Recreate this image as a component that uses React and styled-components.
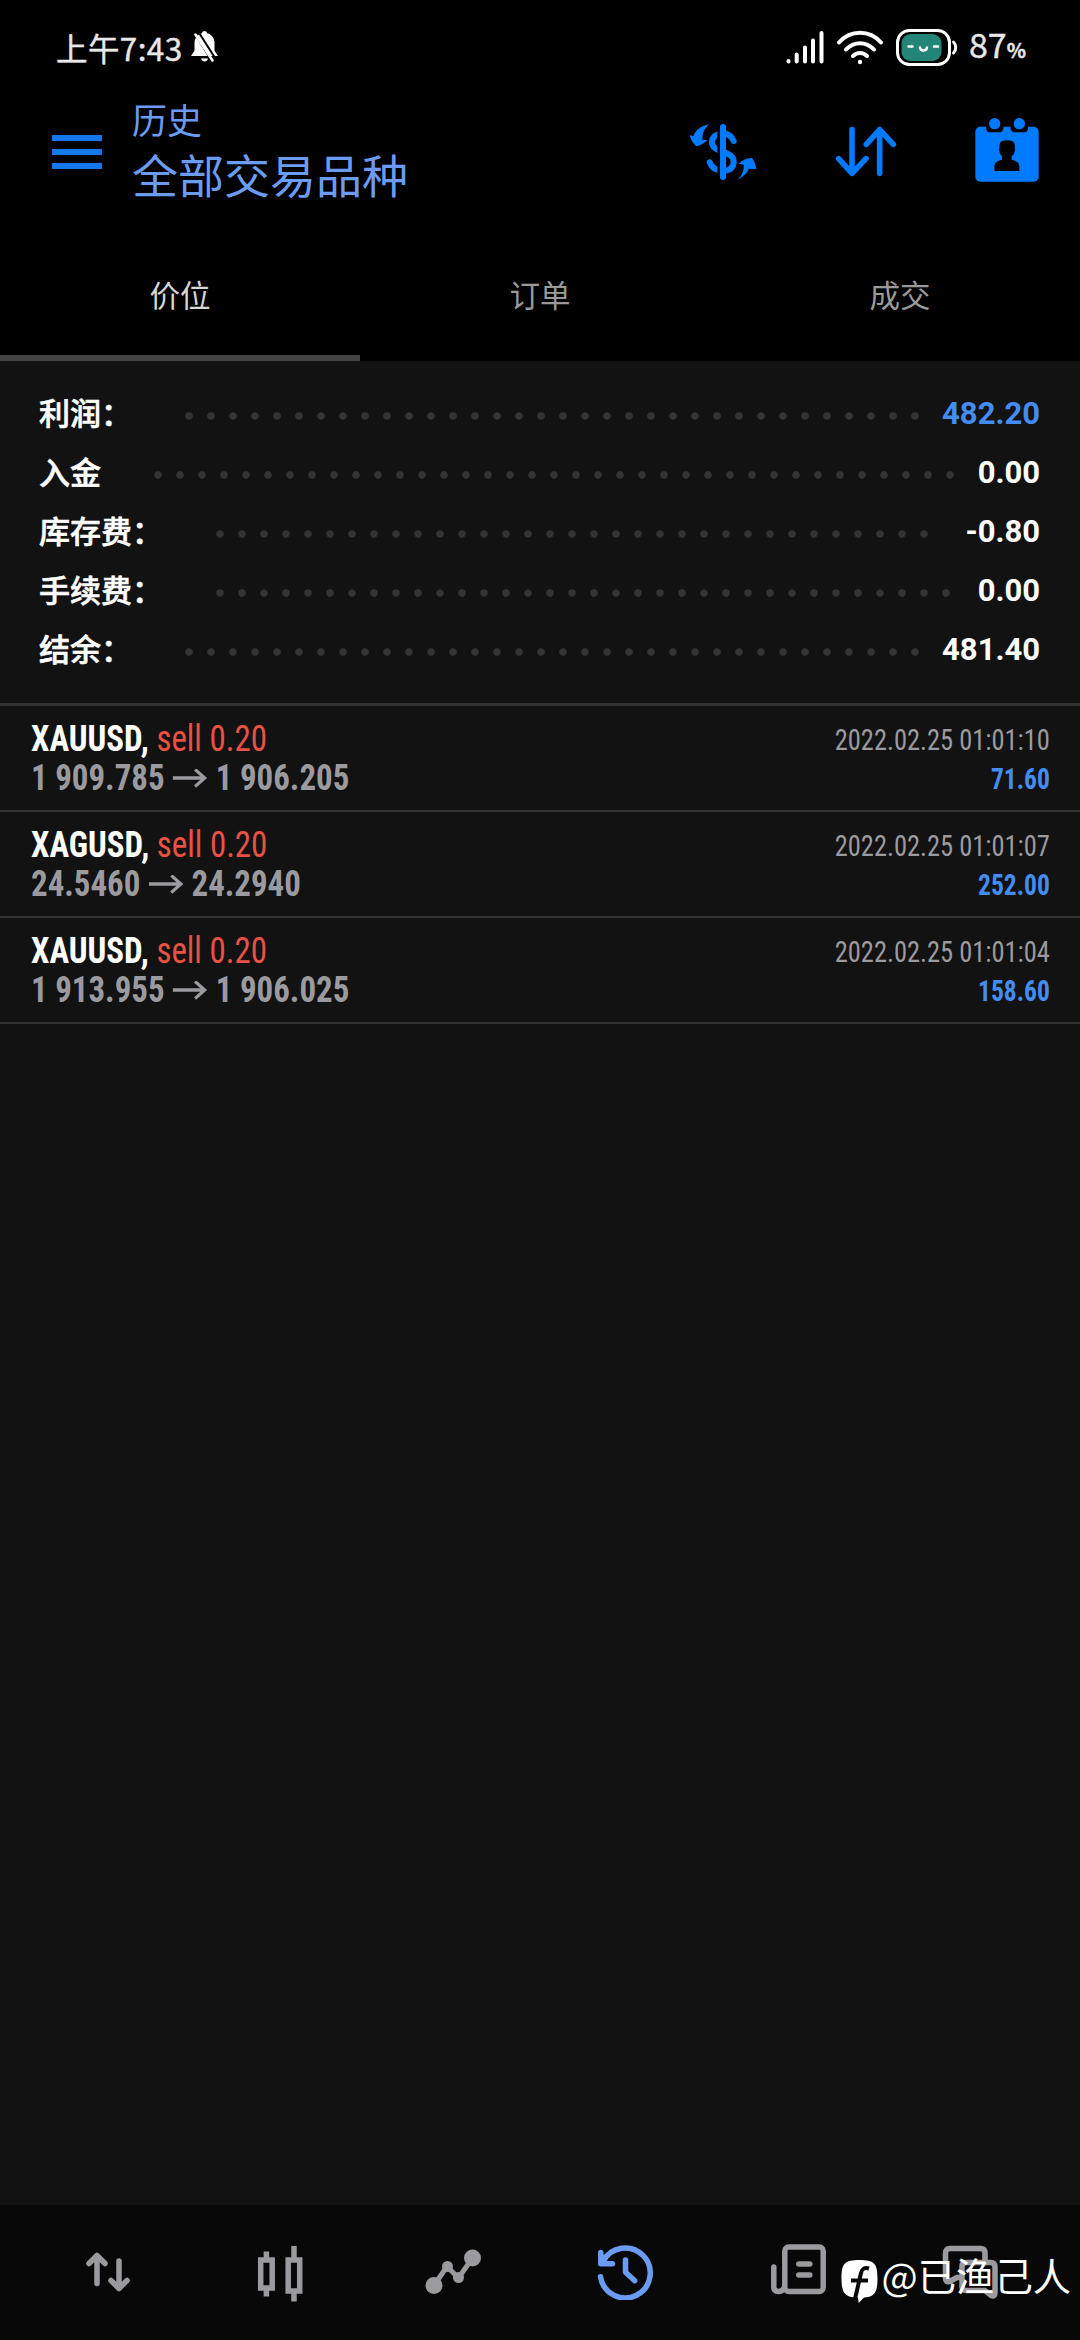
import React from 'react'
import styled, { createGlobalStyle } from 'styled-components'

const CJK = `"Noto Sans CJK SC", sans-serif`
const ROBOTO = `Roboto, "Noto Sans CJK SC", sans-serif`

const colors = {
    accent: "#007aff",
    title: "#6b9cf3",
    profit: "#458cf2",
    sell: "#ea5145",
    muted: "#9b9b9f",
    line: "#333333",
    panel: "#121212",
}

const summary = [
    { label: "利润：", dots: 34, value: "482.20", highlight: true },
    { label: "入金", dots: 37, value: "0.00" },
    { label: "库存费：", dots: 33, value: "-0.80" },
    { label: "手续费：", dots: 34, value: "0.00" },
    { label: "结余：", dots: 34, value: "481.40" },
]

const deals = [
    { symbol: "XAUUSD", side: "sell 0.20", open: "1 909.785", close: "1 906.205", time: "2022.02.25 01:01:10", profit: "71.60" },
    { symbol: "XAGUSD", side: "sell 0.20", open: "24.5460", close: "24.2940", time: "2022.02.25 01:01:07", profit: "252.00" },
    { symbol: "XAUUSD", side: "sell 0.20", open: "1 913.955", close: "1 906.025", time: "2022.02.25 01:01:04", profit: "158.60" },
]

const tabs = ["价位", "订单", "成交"]

const GlobalStyle = createGlobalStyle`
    body {
        margin: 0;
        background: #000;
    }
    svg {
        display: block;
        flex: none;
    }
`

const Screen = styled.div`
    position: relative;
    display: flex;
    flex-direction: column;
    width: 1080px;
    height: 2340px;
    overflow: hidden;
    background: ${colors.panel};
    font-family: ${ROBOTO};
    white-space: nowrap;
`

const StatusBar = styled.div`
    display: flex;
    align-items: center;
    height: 94px;
    padding: 0 54px 0 56px;
    background: #000;
    color: #e8e8e8;
    font-family: ${CJK};
`

const Clock = styled.span`
    flex: 1;
    display: flex;
    align-items: center;
    gap: 8px;
    margin-top: -1px;
    font-size: 31.5px;
    letter-spacing: 0.4px;
    line-height: 44px;
    -webkit-text-stroke: 0.4px;
`

const StatusIcons = styled.div`
    display: flex;
    align-items: center;
    gap: 12px;
`

const BatteryLevel = styled.span`
    margin-left: -1px;
    font-size: 34px;
    line-height: 44px;
    -webkit-text-stroke: 0.4px;

    small {
        font-size: 20px;
        font-weight: 700;
    }
`

const AppBar = styled.header`
    display: flex;
    align-items: center;
    height: 136px;
    padding: 0 41px 0 52px;
    background: #000;
`

const MenuButton = styled.div`
    display: flex;
    flex-direction: column;
    gap: 8px;
    width: 50px;
    margin: -20px 30px 0 0;

    i {
        height: 6px;
        background: #1478ec;
    }
`

const Titles = styled.div`
    flex: 1;
    color: ${colors.title};
    font-family: ${CJK};
    margin-top: -28px;
`

const Section = styled.div`
    font-size: 35px;
    line-height: 50px;
`

const Filter = styled.div`
    font-size: 46px;
    line-height: 58px;
`

const Actions = styled.div`
    display: flex;
    align-items: center;
    margin-top: -21px;
`

const SortSlot = styled.div`
    margin: 0 78px;
`

const CalendarSlot = styled.div`
    margin-top: -3px;
`

const TabRow = styled.nav`
    display: grid;
    grid-template-columns: repeat(3, 1fr);
    height: 131px;
    background: #000;
`

const Tab = styled.div`
    box-sizing: border-box;
    padding-top: 5px;
    border-bottom: 6px solid ${({ $active }) => $active ? "#444" : "transparent"};
    color: ${({ $active }) => $active ? "#d6d6d6" : "#9a9a9a"};
    font-family: ${CJK};
    font-size: 30.5px;
    line-height: 119px;
    text-align: center;
`

const Summary = styled.section`
    box-sizing: border-box;
    height: 345px;
    padding: 23px 40px 0 39px;
    border-bottom: 3px solid ${colors.line};
`

const SummaryLine = styled.div`
    display: flex;
    align-items: center;
    height: 59px;
`

const SummaryLabel = styled.span`
    margin-top: -4px;
    color: #fff;
    font-family: ${CJK};
    font-size: 31px;
    font-weight: 500;
    line-height: 59px;
    -webkit-text-stroke: 0.6px;
`

const Leader = styled.span`
    width: ${({ $count }) => $count * 22}px;
    height: 22px;
    margin: 5px auto 0 46px;
    background: radial-gradient(circle at 11px 11px, #343434 3.3px, transparent 4.2px) 0 0 / 22px 22px repeat-x;
`

const SummaryValue = styled.span`
    color: ${({ $highlight }) => $highlight ? colors.profit : "#fff"};
    font-size: 31px;
    font-weight: 700;
    line-height: 59px;
`

const DealRow = styled.article`
    display: flex;
    justify-content: space-between;
    box-sizing: border-box;
    height: 106px;
    padding: 14px 30px 0 31px;
    border-bottom: 2px solid ${colors.line};
    font-stretch: 75%;
    line-height: 39px;
`

const DealMain = styled.div`
    font-size: 36px;
    transform: scaleX(0.914);
    transform-origin: left;
`

const DealSide = styled.div`
    padding-top: 1px;
    font-size: 29px;
    text-align: right;
`

const Symbol = styled.div`
    color: #fff;
    font-weight: 700;

    span {
        color: ${colors.sell};
        font-weight: 400;
    }
`

const Prices = styled.div`
    display: flex;
    align-items: center;
    gap: 9px;
    color: ${colors.muted};
    font-weight: 700;
`

const Time = styled.div`
    color: ${colors.muted};
    transform: scaleX(0.912);
    transform-origin: right;
`

const Profit = styled.div`
    color: ${colors.profit};
    font-weight: 700;
    transform: scaleX(0.88);
    transform-origin: right;
`

const BottomNav = styled.nav`
    display: grid;
    grid-template-columns: repeat(6, 1fr);
    align-items: start;
    justify-items: center;
    box-sizing: border-box;
    height: 135px;
    margin-top: auto;
    padding: 38px 24px 0 22px;
    background: #080808;
    color: ${colors.muted};
`

const NavItem = styled.div`
    color: ${({ $active }) => $active ? colors.title : "inherit"};
`

const Watermark = styled.div`
    position: absolute;
    right: 9px;
    bottom: 36px;
    display: flex;
    align-items: center;
    gap: 3px;
    color: #fff;
    font-family: ${CJK};
    font-size: 38.3px;
    line-height: 44px;

    span {
        margin-top: -14px;
    }
`

function MutedBell() {
    return (
        <svg width="27" height="31" viewBox="0 0 27 31">
            <path d="M13.5 0c1.6 0 2.3 1 2.5 2.2 4.600 1 7.500 4.800 7.500 10v7.500L27 25H0l3.500-5.300v-7.500c0-5 3-9 7.500-10C11.200 1 12 0 13.500 0z" fill="#fff" />
            <path d="M10 27.500h7c-.5 2-1.800 3-3.500 3s-3-1-3.500-3z" fill="#fff" />
            <path d="M3.500 2 22 32M7.500 1 26 30" stroke="#000" strokeWidth="2" />
            <path d="M4.500 3.500 21.500 29.500" stroke="#fff" strokeWidth="2.600" strokeLinecap="round" />
        </svg>
    )
}

function Signal() {
    return (
        <svg width="38" height="34" viewBox="0 0 38 34" stroke="#fff" strokeWidth="4" strokeLinecap="round">
            <path d="M2.500 31v.5M10.700 24.500v7M19 17.500v14M27 10.500v21M35.500 3v28.500" />
        </svg>
    )
}

function Wifi() {
    return (
        <svg width="48" height="35" viewBox="0 0 48 35" fill="none" stroke="#fff" strokeWidth="4" strokeLinecap="round">
            <path d="M3 12.500C14.500-.5 33.500-.5 45 12.500M10 19.500c8-8.500 20-8.500 28 0M17 26c4-4 10-4 14 0" />
            <circle cx="24" cy="32" r="2.200" fill="#fff" stroke="none" />
        </svg>
    )
}

function Battery() {
    return (
        <svg width="62" height="37" viewBox="0 0 62 37" fill="none">
            <rect x="1.500" y="1.500" width="52" height="34" rx="12" stroke="#fff" strokeWidth="3" />
            <rect x="5.500" y="5" width="40" height="27" rx="9" fill="#238577" />
            <path d="M12.500 17.500h4M38 17.500h4" stroke="#fff" strokeWidth="2.400" strokeLinecap="round" />
            <path d="M24 18.500c.5 4 6.500 4 7 0" stroke="#fff" strokeWidth="2.400" strokeLinecap="round" />
            <path d="M57.500 13c3 3 3 8 0 11" stroke="#fff" strokeWidth="3" strokeLinecap="round" />
        </svg>
    )
}

function CurrencyIcon() {
    return (
        <svg width="68" height="58" viewBox="84 99 204 174" fill={colors.accent}>
            <path d="M218 153C212 138 200 131 186 131C165 131 153 142 153 157C153 190 218 180 218 215C218 234 205 242 186 242C165 242 152 234 146 217" fill="none" stroke={colors.accent} strokeWidth="18" strokeLinecap="round" />
            <path d="M169 110h10v152h-10z" fill="#000" />
            <rect x="177" y="102" width="18" height="168" rx="9" />
            <path d="M145 103C118 108 102 122 97 139L86 135Q90 155 106 169Q122 166 139 151L124 149C124 130 130 115 145 103Z" />
            <path d="M229 270C255 254 260 245 263 236L286 238Q284 218 273 204Q250 204 233 221L249 224C248 245 242 258 229 270Z" />
        </svg>
    )
}

function SortIcon() {
    return (
        <svg width="62" height="51" viewBox="522 109 186 153" fill="none" stroke={colors.accent} strokeWidth="17" strokeLinecap="round" strokeLinejoin="round">
            <path d="M573 120V251M533 207L573 251L615 207M656 251V120M616 164L656 120L697 164" />
        </svg>
    )
}

function AccountCalendar() {
    return (
        <svg width="64" height="64" viewBox="944 86 192 192" fill={colors.accent}>
            <rect x="945" y="112" width="190" height="165" rx="15" />
            <path d="M977 108H1029V118Q1027 129 1016 129H990Q979 129 977 118ZM1051 108H1103V118Q1101 129 1090 129H1064Q1053 129 1051 118Z" fill="#000" />
            <circle cx="1003" cy="103" r="17" />
            <circle cx="1077" cy="103" r="17" />
            <path d="M1018 165Q1020 153 1040 153Q1061 153 1063 165L1064 183Q1062 195 1054 201V211Q1076 215 1077 230V245H1002V230Q1003 215 1025 211V201Q1018 195 1016 183Z" fill="#000" />
        </svg>
    )
}

function PriceArrow() {
    return (
        <svg width="38" height="20" viewBox="0 0 38 20" fill="none" stroke={colors.muted} strokeWidth="3.400">
            <path d="M0 9h35M24.500.5 35 9l-10.500 8.500" />
        </svg>
    )
}

function QuotesIcon() {
    return (
        <svg width="56" height="56" viewBox="0 0 56 56" fill="none" stroke="currentColor" strokeWidth="5.500" strokeLinecap="round" strokeLinejoin="round">
            <path d="M17 40.500V13M9 20.500l8-8 8 8M39 18v27.500M31 37.500l8 8 8-8" />
        </svg>
    )
}

function CandlesIcon() {
    return (
        <svg width="56" height="60" viewBox="0 0 56 60" fill="none" stroke="currentColor" strokeWidth="5.500">
            <path d="M8.700 17h11.500v28H8.700zM36.200 17h11.500v31H36.200zM14.400 8.500V17M14.400 45v8.500M42 3v14M42 48v10.500" />
        </svg>
    )
}

function TrendIcon() {
    return (
        <svg width="56" height="56" viewBox="0 0 56 56" fill="currentColor">
            <path d="M9 42.500 22 23.500 33.500 35 47.500 15" fill="none" stroke="currentColor" strokeWidth="5" />
            <circle cx="9" cy="42.500" r="8.500" />
            <circle cx="22.500" cy="23.500" r="5.500" />
            <circle cx="33.500" cy="34.500" r="5.500" />
            <circle cx="47.500" cy="15" r="8.500" />
        </svg>
    )
}

function HistoryIcon() {
    return (
        <svg width="57" height="57" viewBox="0 0 57 57" fill="none" stroke="currentColor" strokeWidth="5.500" strokeLinecap="round" strokeLinejoin="round">
            <path d="M3.500 33.700A25 25 0 1 0 6 18.500M3.800 9.500V20.700H15.500M28.500 17v12.300l9.200 8.400" />
            <path d="M4 12v8.700h9z" fill="currentColor" stroke="none" />
        </svg>
    )
}

function NewsIcon() {
    return (
        <svg width="57" height="56" viewBox="0 0 57 56" fill="none" stroke="currentColor" strokeWidth="5.500" strokeLinecap="round" strokeLinejoin="round">
            <rect x="15.800" y="4" width="38.400" height="44.500" rx="4" />
            <path d="M4.800 24v20q0 4.500 4.500 4.500t6-4M29.800 21h11M29.800 32h11" />
        </svg>
    )
}

function ChatIcon() {
    return (
        <svg width="57" height="57" viewBox="0 0 57 57" fill="none" stroke="currentColor" strokeWidth="5.500" strokeLinecap="round" strokeLinejoin="round">
            <path d="M20 34.500h-4l-7.500 4q-4 1-4-3V10q0-4.500 4.500-4.500h30.500q4.500 0 4.500 4.500v9" />
            <path d="M25 19.500h24.500q4.500 0 4.500 4.500v26q0 4-4 2.500l-6-5H25q-4 0-4-4v-20q0-4 4-4z" />
        </svg>
    )
}

function WatermarkLogo() {
    return (
        <svg width="39" height="45" viewBox="0 0 39 45">
            <path d="M19.500 1C34 1 37.500 4 37.500 19.500C37.500 34 34 38 24 38.500L18.700 44L18 38.500C5 38.500 1.500 34 1.500 19.500C1.500 4 5 1 19.500 1Z" fill="#fff" />
            <path d="M29 9.500Q22.500 7.500 21 14L15 40M11 21.500H28" fill="none" stroke="#080808" strokeWidth="4" />
        </svg>
    )
}

function Deal({ symbol, side, open, close, time, profit }) {
    return (
        <DealRow>
            <DealMain>
                <Symbol>{symbol}, <span>{side}</span></Symbol>
                <Prices>{open}<PriceArrow />{close}</Prices>
            </DealMain>
            <DealSide>
                <Time>{time}</Time>
                <Profit>{profit}</Profit>
            </DealSide>
        </DealRow>
    )
}

const navIcons = [QuotesIcon, CandlesIcon, TrendIcon, HistoryIcon, NewsIcon, ChatIcon]

function App() {
    return (
        <Screen>
            <GlobalStyle />
            <StatusBar>
                <Clock>上午7:43<MutedBell /></Clock>
                <StatusIcons>
                    <Signal />
                    <Wifi />
                    <Battery />
                    <BatteryLevel>87<small>%</small></BatteryLevel>
                </StatusIcons>
            </StatusBar>
            <AppBar>
                <MenuButton><i /><i /><i /></MenuButton>
                <Titles>
                    <Section>历史</Section>
                    <Filter>全部交易品种</Filter>
                </Titles>
                <Actions>
                    <CurrencyIcon />
                    <SortSlot><SortIcon /></SortSlot>
                    <CalendarSlot><AccountCalendar /></CalendarSlot>
                </Actions>
            </AppBar>
            <TabRow>
                {tabs.map((tab, i) => <Tab key={tab} $active={i === 0}>{tab}</Tab>)}
            </TabRow>
            <Summary>
                {summary.map(({ label, dots, value, highlight }) => (
                    <SummaryLine key={label}>
                        <SummaryLabel>{label}</SummaryLabel>
                        <Leader $count={dots} />
                        <SummaryValue $highlight={highlight}>{value}</SummaryValue>
                    </SummaryLine>
                ))}
            </Summary>
            {deals.map(deal => <Deal key={deal.time} {...deal} />)}
            <BottomNav>
                {navIcons.map((Icon, i) => <NavItem key={i} $active={i === 3}><Icon /></NavItem>)}
            </BottomNav>
            <Watermark><WatermarkLogo /><span>@已渔己人</span></Watermark>
        </Screen>
    )
}

export default App
